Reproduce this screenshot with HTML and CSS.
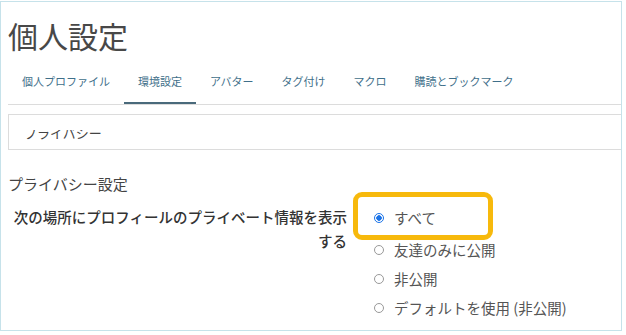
FILE: index.html
```html
<!DOCTYPE html>
<html lang="ja">
<head>
<meta charset="utf-8">
<title>個人設定</title>
<link rel="stylesheet" href="styles.css">
</head>
<body>
<div class="frame">
  <h1 class="title">個人設定</h1>
  <nav class="tabs">
    <a class="tab">個人プロファイル</a>
    <a class="tab active">環境設定</a>
    <a class="tab">アバター</a>
    <a class="tab">タグ付け</a>
    <a class="tab">マクロ</a>
    <a class="tab">購読とブックマーク</a>
  </nav>
  <div class="panel">
    <span class="clip"><span class="clip-text">プライバシー</span></span>
  </div>
  <h2 class="section">プライバシー設定</h2>
  <div class="row">
    <div class="label">次の場所にプロフィールのプライベート情報を表示する</div>
    <ul class="options">
      <li class="option first"><span class="radio checked"></span><span>すべて</span><span class="highlight"></span></li>
      <li class="option"><span class="radio"></span><span>友達のみに公開</span></li>
      <li class="option"><span class="radio"></span><span>非公開</span></li>
      <li class="option"><span class="radio"></span><span>デフォルトを使用 (非公開)</span></li>
    </ul>
  </div>
</div>
</body>
</html>
```
FILE: styles.css
```css
* { box-sizing: border-box; }
html, body { margin: 0; padding: 0; background: #fff; }
body {
  font-family: "Noto Sans CJK JP", "Noto Sans", sans-serif;
  color: #444;
}
.frame {
  margin-top: 1px;
  width: 622px;
  height: 330px;
  border: 1px solid #c6e2ea;
  padding-left: 7px;
  overflow: hidden;
}
.title {
  margin: 13px 0 0 0;
  font-size: 30px;
  line-height: 40px;
  font-weight: 400;
  color: #484848;
}
.tabs {
  margin-top: 18px;
  display: flex;
  border-bottom: 1px solid #dcdcdc;
}
.tab {
  display: block;
  padding: 0 14px 13px 14px;
  font-size: 11px;
  line-height: 16px;
  color: #3f6f8a;
  border-bottom: 2px solid transparent;
}
.tab.active { border-bottom-color: #4a6a7b; }
.panel {
  margin-top: 9px;
  border: 1px solid #dcdcdc;
  border-right: 0;
  padding: 15px 0 7px 15px;
}
.clip {
  display: flex;
  align-items: flex-end;
  height: 12px;
  overflow: hidden;
}
.clip-text {
  display: block;
  font-size: 13px;
  line-height: 18px;
  color: #444;
  white-space: nowrap;
}
.section {
  margin: 24px 0 0 0;
  font-size: 15px;
  line-height: 20px;
  font-weight: 400;
  color: #444;
}
.row {
  margin-top: 9px;
  display: flex;
  align-items: flex-start;
}
.label {
  width: 339px;
  flex: none;
  padding-top: 2px;
  text-align: right;
  font-size: 14.5px;
  line-height: 24px;
  font-weight: 500;
  color: #333;
}
.options {
  list-style: none;
  margin: 0;
  padding: 0 0 0 27px;
}
.option {
  position: relative;
  display: flex;
  align-items: center;
  height: 29px;
  font-size: 14.5px;
  color: #555;
  white-space: nowrap;
}
.option.first { margin-bottom: 3px; }
.radio {
  width: 10px;
  height: 10px;
  flex: none;
  margin-right: 10px;
  border-radius: 50%;
  border: 1px solid #999;
  background: #fff;
}
.radio.checked {
  border: 1.5px solid #1a73e8;
  background: radial-gradient(circle closest-side, #1a73e8 0 62%, #fff 75%);
}
.highlight {
  position: absolute;
  left: -21px;
  top: -11px;
  width: 140px;
  height: 48px;
  border: 5px solid #f7b90c;
  border-radius: 9px;
  pointer-events: none;
}
```
